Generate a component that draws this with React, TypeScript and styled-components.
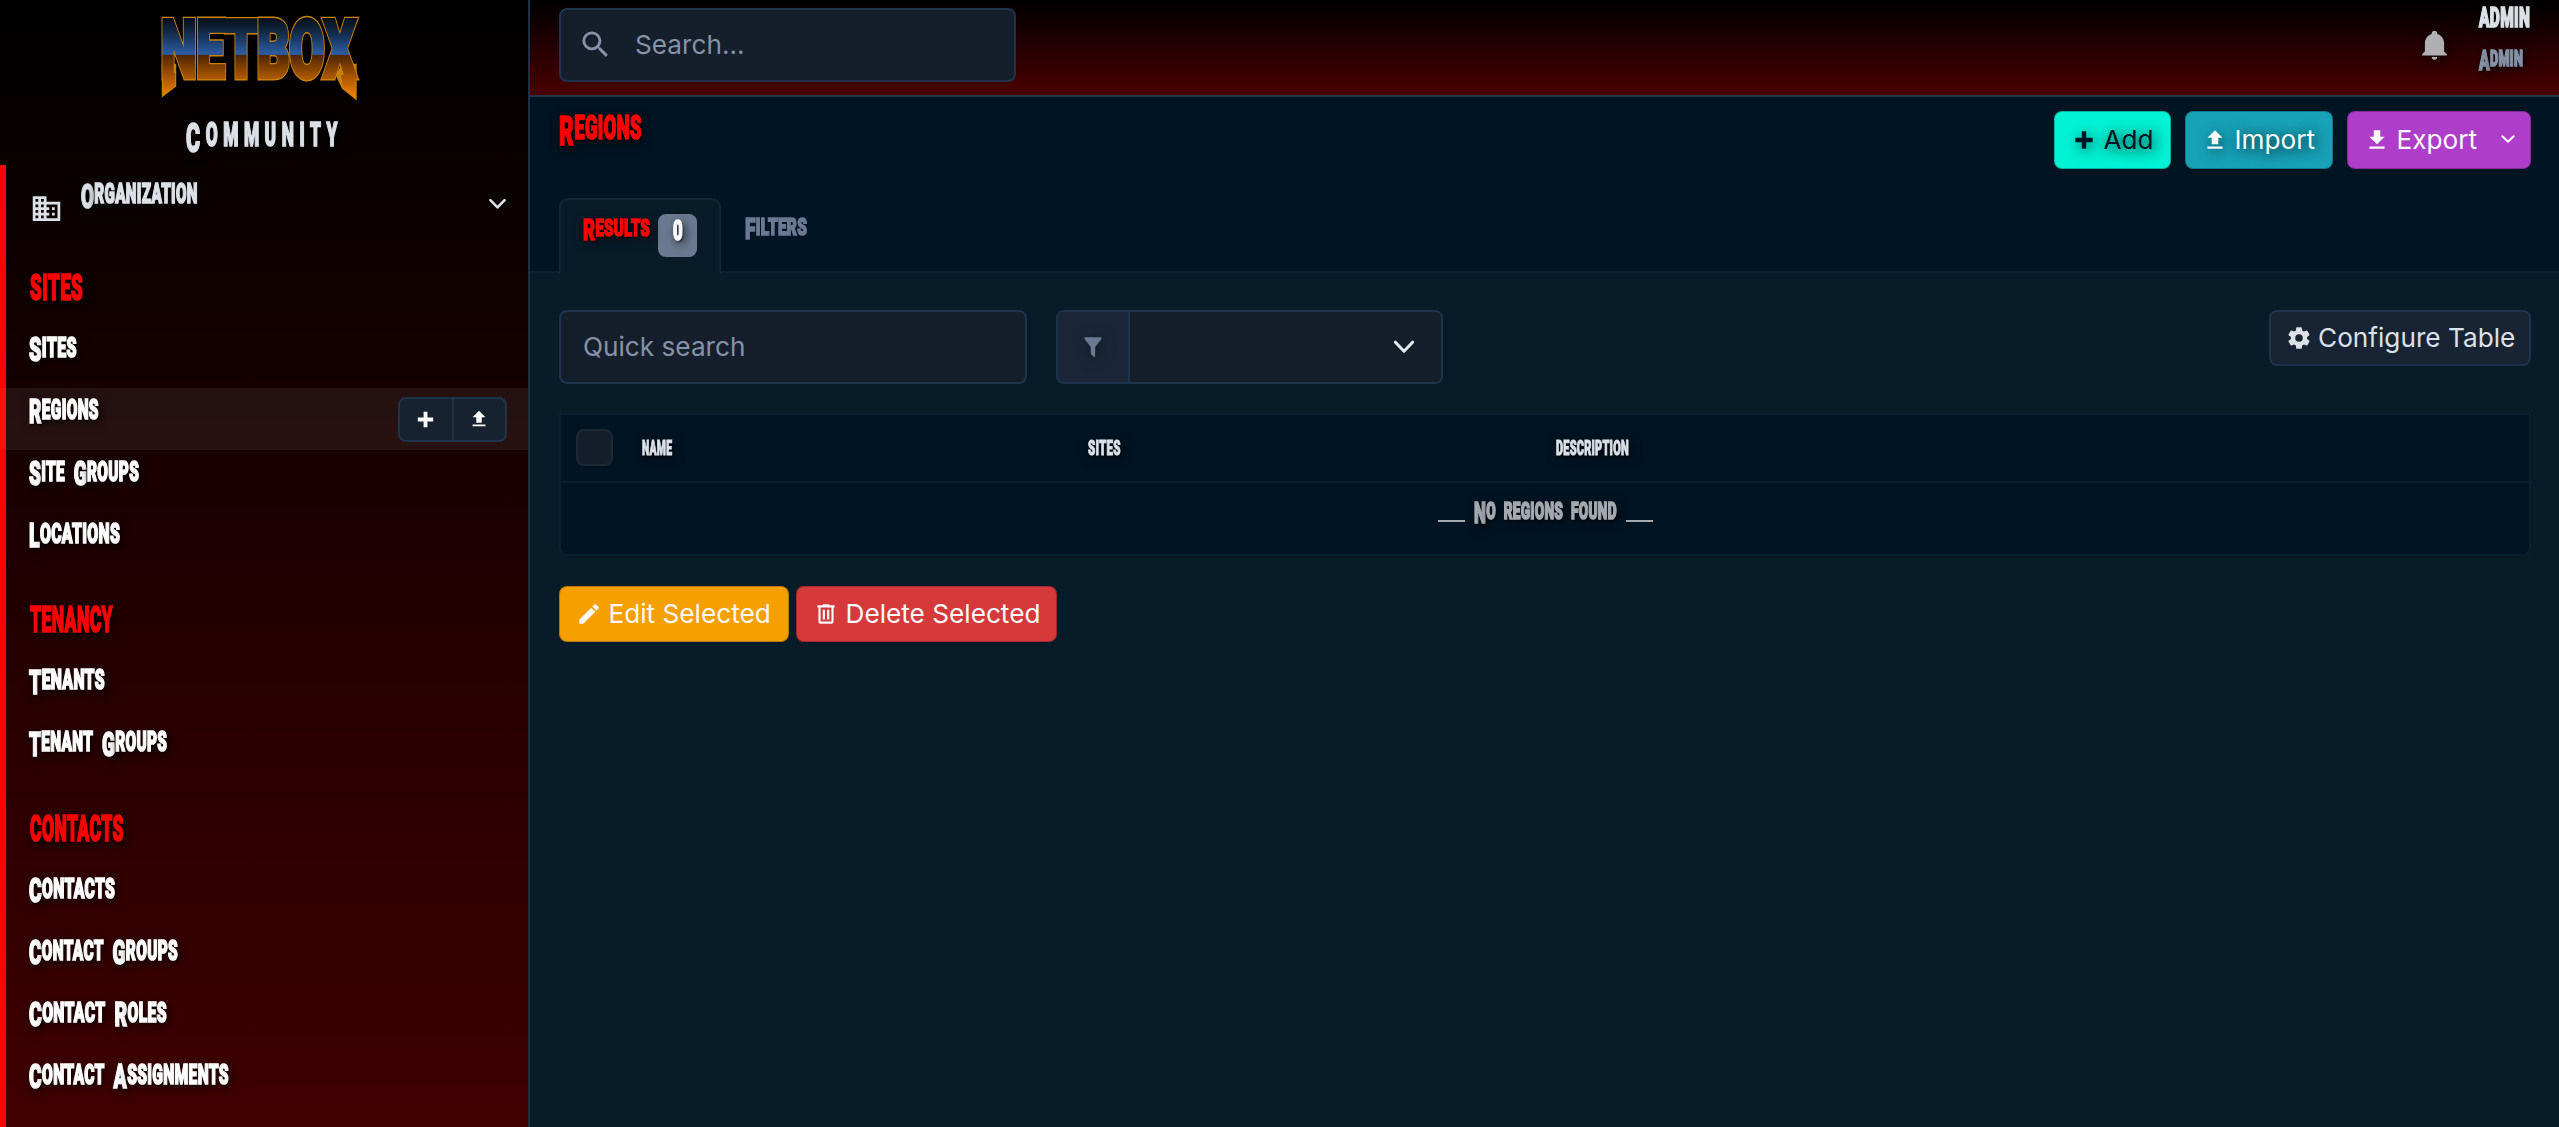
import React, { useLayoutEffect, useRef, useState } from "react";
import styled, { createGlobalStyle, css } from "styled-components";

const Global = createGlobalStyle`
  *, *::before, *::after { box-sizing: border-box; }
  html, body { margin: 0; padding: 0; background: #081b29; }
  body { font-family: Inter, "Liberation Sans", sans-serif; font-size: 26.2px; color: #dce1e7; overflow: hidden; }
`;

const glow = "2px 2px 14px rgba(0, 0, 0, 0.95)";

/* ---------- condensed display lettering ---------- */

const DisplayBox = styled.span<{ $w: number; $h: number; $color: string; $spacing: number; $shadow: boolean }>`
  display: block;
  flex: none;
  width: ${(p) => p.$w}px;
  height: ${(p) => p.$h}px;
  line-height: ${(p) => p.$h}px;
  font-family: Roboto, "Liberation Sans", sans-serif;
  font-weight: 900;
  font-size: ${(p) => (p.$h - 1) / 0.711}px;
  letter-spacing: ${(p) => p.$spacing}em;
  word-spacing: 0.3em;
  text-transform: uppercase;
  white-space: nowrap;
  color: ${(p) => p.$color};
  -webkit-text-stroke: ${(p) => (p.$h > 16 ? 1.7 : 1)}px ${(p) => p.$color};
  text-shadow: ${(p) => (p.$shadow ? "2px 2px 3px rgba(0,0,0,.6), 4px 3px 14px #000" : "none")};
`;

const DisplayInner = styled.span`
  display: inline-block;
  transform-origin: 0 50%;
`;

const Word = styled.span<{ $tail: boolean }>`
  display: inline-block;
  ${(p) =>
    p.$tail &&
    css`
      &::first-letter {
        font-size: 1.24em;
        vertical-align: -0.138em;
      }
    `}
`;

type DisplayProps = {
  text: string;
  w: number;
  h: number;
  color?: string;
  spacing?: number;
  tails?: boolean;
  shadow?: boolean;
};

function Display({ text, w, h, color = "#fff", spacing = 0.02, tails = true, shadow = true }: DisplayProps) {
  const ref = useRef<HTMLSpanElement>(null);
  const [scale, setScale] = useState(1);
  useLayoutEffect(() => {
    if (ref.current) setScale(w / (ref.current.offsetWidth || 1));
  }, [text, w, h]);
  return (
    <DisplayBox $w={w} $h={h} $color={color} $spacing={spacing} $shadow={shadow}>
      <DisplayInner ref={ref} style={{ transform: `scaleX(${scale})` }}>
        {text.split(" ").map((word, i) => (
          <React.Fragment key={i}>
            {i > 0 && " "}
            <Word $tail={tails && /^[A-Z]/.test(word)}>{word}</Word>
          </React.Fragment>
        ))}
      </DisplayInner>
    </DisplayBox>
  );
}

/* ---------- icons ---------- */

const paths = {
  plus: "M20 14H14V20H10V14H4V10H10V4H14V10H20V14Z",
  upload: "M9,16V10H5L12,3L19,10H15V16H9M5,20V18H19V20H5Z",
  download: "M5,20H19V18H5M19,9H15V3H9V9H5L12,16L19,9Z",
  domain:
    "M18,15H16V17H18M18,11H16V13H18M20,19H12V17H14V15H12V13H14V11H12V9H20M10,7H8V5H10M10,11H8V9H10M10,15H8V13H10M10,19H8V17H10M6,7H4V5H6M6,11H4V9H6M6,15H4V13H6M6,19H4V17H6M12,7V3H2V21H22V7H12Z",
  magnify:
    "M9.5,3A6.5,6.5 0 0,1 16,9.5C16,11.11 15.41,12.59 14.44,13.73L14.71,14H15.5L20.5,19L19,20.5L14,15.5V14.71L13.73,14.44C12.59,15.41 11.11,16 9.5,16A6.5,6.5 0 0,1 3,9.5A6.5,6.5 0 0,1 9.5,3M9.5,5C7,5 5,7 5,9.5C5,12 7,14 9.5,14C12,14 14,12 14,9.5C14,7 12,5 9.5,5Z",
  bell: "M21,19V20H3V19L5,17V11C5,7.9 7.03,5.17 10,4.29C10,4.19 10,4.1 10,4A2,2 0 0,1 12,2A2,2 0 0,1 14,4C14,4.1 14,4.19 14,4.29C16.97,5.17 19,7.9 19,11V17L21,19M14,21A2,2 0 0,1 12,23A2,2 0 0,1 10,21",
  filter:
    "M14,12V19.88C14.04,20.18 13.94,20.5 13.71,20.71C13.32,21.1 12.69,21.1 12.3,20.71L10.29,18.7C10.06,18.47 9.96,18.16 10,17.87V12H9.97L4.21,4.62C3.87,4.19 3.95,3.56 4.38,3.22C4.57,3.08 4.78,3 5,3V3H19V3C19.22,3 19.43,3.08 19.62,3.22C20.05,3.56 20.13,4.19 19.79,4.62L14.03,12H14Z",
  cog: "M12,15.5A3.5,3.5 0 0,1 8.5,12A3.5,3.5 0 0,1 12,8.5A3.5,3.5 0 0,1 15.5,12A3.5,3.5 0 0,1 12,15.5M19.43,12.97C19.47,12.65 19.5,12.33 19.5,12C19.5,11.67 19.47,11.34 19.43,11L21.54,9.37C21.73,9.22 21.78,8.95 21.66,8.73L19.66,5.27C19.54,5.05 19.27,4.96 19.05,5.05L16.56,6.05C16.04,5.66 15.5,5.32 14.87,5.07L14.5,2.42C14.46,2.18 14.25,2 14,2H10C9.75,2 9.54,2.18 9.5,2.42L9.13,5.07C8.5,5.32 7.96,5.66 7.44,6.05L4.95,5.05C4.73,4.96 4.46,5.05 4.34,5.27L2.34,8.73C2.21,8.95 2.27,9.22 2.46,9.37L4.57,11C4.53,11.34 4.5,11.67 4.5,12C4.5,12.33 4.53,12.65 4.57,12.97L2.46,14.63C2.27,14.78 2.21,15.05 2.34,15.27L4.34,18.73C4.46,18.95 4.73,19.03 4.95,18.95L7.44,17.94C7.96,18.34 8.5,18.68 9.13,18.93L9.5,21.58C9.54,21.82 9.75,22 10,22H14C14.25,22 14.46,21.82 14.5,21.58L14.87,18.93C15.5,18.67 16.04,18.34 16.56,17.94L19.05,18.95C19.27,19.03 19.54,18.95 19.66,18.73L21.66,15.27C21.78,15.05 21.73,14.78 21.54,14.63L19.43,12.97Z",
  pencil:
    "M20.71,7.04C21.1,6.65 21.1,6 20.71,5.63L18.37,3.29C18,2.9 17.35,2.9 16.96,3.29L15.12,5.12L18.87,8.87M3,17.25V21H6.75L17.81,9.93L14.06,6.18L3,17.25Z",
  trash:
    "M9,3V4H4V6H5V19A2,2 0 0,0 7,21H17A2,2 0 0,0 19,19V6H20V4H15V3H9M7,6H17V19H7V6M9,8V17H11V8H9M13,8V17H15V8H13Z",
};

const Svg = styled.svg<{ $glow?: boolean }>`
  display: block;
  flex: none;
  overflow: visible;
  filter: ${(p) => (p.$glow ? "drop-shadow(2px 3px 7px rgba(0,0,0,.6))" : "none")};
`;

const Icon = ({ name, size, glow }: { name: keyof typeof paths; size: number; glow?: boolean }) => (
  <Svg width={size} height={size} viewBox="0 0 24 24" fill="currentColor" $glow={glow}>
    <path d={paths[name]} />
  </Svg>
);

const Chevron = ({ w, stroke = 2.6 }: { w: number; stroke?: number }) => (
  <Svg width={w} height={w * 0.58} viewBox={`0 0 ${w} ${w * 0.58}`} fill="none" stroke="currentColor" strokeWidth={stroke} strokeLinecap="round" strokeLinejoin="round">
    <path d={`M1.4 1.2L${w / 2} ${w * 0.58 - 1.4}L${w - 1.4} 1.2`} />
  </Svg>
);

/* ---------- sidebar ---------- */

const Page = styled.div`
  display: flex;
  width: 2559px;
  height: 1127px;
  overflow: hidden;
`;

const Sidebar = styled.aside`
  width: 530px;
  height: 1127px;
  flex: none;
  border-right: 2px solid #1f2f45;
  background: linear-gradient(#000 0, #060000 110px, #400000 1127px);
  display: flex;
  flex-direction: column;
`;

const Brand = styled.div`
  height: 165px;
  flex: none;
  padding: 15px 0 0 158px;
`;

const Community = styled.div`
  padding: 20px 0 0 28px;
`;

const Menu = styled.nav`
  flex: 1;
  position: relative;
  &::before {
    content: "";
    position: absolute;
    inset: 0 auto 0 0;
    width: 6px;
    background: #f00;
  }
`;

const MenuHead = styled.div`
  display: flex;
  height: 81px;
  padding: 0 22px 0 30px;
  color: #dce1e7;
`;
const HeadIcon = styled.div`
  padding: 27px 18px 0 0;
`;
const HeadText = styled.div`
  flex: 1;
  padding-top: 19px;
`;
const HeadChevron = styled.div`
  padding-top: 34px;
`;

const GroupTitle = styled.div<{ $h: number }>`
  height: ${(p) => p.$h}px;
  padding-left: 29.5px;
  display: flex;
  align-items: flex-end;
  padding-bottom: 25.5px;
`;

const Item = styled.div<{ $active?: boolean }>`
  height: 62px;
  padding: 11.5px 21px 0 29px;
  display: flex;
  justify-content: space-between;
  align-items: flex-start;
  position: relative;
  background: ${(p) => (p.$active ? "rgba(255,255,255,.065)" : "transparent")};
`;

const Actions = styled.div`
  display: flex;
  width: 109px;
  height: 45px;
  margin-top: -3px;
  border: 2px solid #1f344c;
  border-radius: 8px;
  background: #172230;
`;
const Action = styled.div`
  flex: 1;
  display: flex;
  align-items: center;
  justify-content: center;
  color: #fff;
  & + & {
    border-left: 2px solid #1f344c;
  }
`;

const LogoText = styled.text`
  font-family: Roboto, "Liberation Sans", sans-serif;
  font-weight: 900;
  font-size: 80px;
`;

const Lettering = () => (
  <LogoText x="3" y="62" textLength="195" lengthAdjust="spacingAndGlyphs">
    NETBOX
  </LogoText>
);

const Logo = () => (
  <Svg width={204} height={88} viewBox="0 0 204 88">
    <defs>
      <linearGradient id="doom" gradientUnits="userSpaceOnUse" x1="0" y1="2" x2="0" y2="85">
        <stop offset="0" stopColor="#060d16" />
        <stop offset=".2" stopColor="#142c4b" />
        <stop offset=".45" stopColor="#2c5ea6" />
        <stop offset=".46" stopColor="#4e2500" />
        <stop offset=".72" stopColor="#a75500" />
        <stop offset="1" stopColor="#ff8a00" />
      </linearGradient>
    </defs>
    <g fill="#c98205" stroke="#c98205" strokeWidth="7" strokeLinejoin="miter">
      <path strokeWidth="2.4" d="M5 50V80L17 71V50Z" />
      <path strokeWidth="2.4" d="M197.500 50V83L185 73L179 60L185 50Z" />
      <Lettering />
    </g>
    <g fill="url(#doom)" stroke="url(#doom)" strokeWidth="4.2" strokeLinejoin="miter">
      <Lettering />
      <path stroke="none" d="M5 58V80L17 71V58Z" />
      <path stroke="none" d="M197.500 60V83L185 73L183 60Z" />
    </g>
  </Svg>
);

type Row = { text: string; w: number; active?: boolean };
const groups: { title: string; w: number; h: number; items: Row[] }[] = [
  {
    title: "SITES",
    w: 53,
    h: 80,
    items: [
      { text: "Sites", w: 48 },
      { text: "Regions", w: 70, active: true },
      { text: "Site Groups", w: 110 },
      { text: "Locations", w: 91 },
    ],
  },
  {
    title: "TENANCY",
    w: 83,
    h: 84.5,
    items: [
      { text: "Tenants", w: 76 },
      { text: "Tenant Groups", w: 138 },
    ],
  },
  {
    title: "CONTACTS",
    w: 94,
    h: 84.5,
    items: [
      { text: "Contacts", w: 86 },
      { text: "Contact Groups", w: 149 },
      { text: "Contact Roles", w: 138 },
      { text: "Contact Assignments", w: 200 },
    ],
  },
];

/* ---------- main ---------- */

const Main = styled.main`
  flex: 1;
  display: flex;
  flex-direction: column;
  min-width: 0;
`;

const TopBar = styled.header`
  height: 97px;
  flex: none;
  border-bottom: 2px solid #24344a;
  background: linear-gradient(#000 0, #4a0000 100%);
  display: flex;
  justify-content: space-between;
  padding: 8px 28px 0 29px;
`;

const SearchBox = styled.div`
  width: 457px;
  height: 74px;
  border: 2px solid #1f344c;
  border-radius: 8px;
  background: #151f2b;
  display: flex;
  align-items: center;
  gap: 22px;
  padding: 0 0 1px 17px;
  color: #8592a8;
`;

const UserArea = styled.div`
  display: flex;
  color: #b0afb4;
`;
const BellWrap = styled.div`
  padding: 20px 28px 0 0;
`;
const UserNames = styled.div`
  width: 52px;
  display: flex;
  flex-direction: column;
  gap: 22px;
`;

const PageHead = styled.section`
  height: 176px;
  flex: none;
  background: #001423;
  border-bottom: 2px solid #082032;
  padding: 14px 28px 0 29px;
  display: flex;
  flex-direction: column;
  justify-content: space-between;
`;
const TitleRow = styled.div`
  display: flex;
  justify-content: space-between;
  align-items: flex-start;
`;
const Title = styled.h1`
  margin: 0;
  padding-top: 5px;
`;
const Buttons = styled.div<{ $gap: number }>`
  display: flex;
  gap: ${(p) => p.$gap}px;
`;
const Button = styled.button<{ $bg: string; $fg?: string; $w: number; $h: number; $glow?: boolean; $border?: string; $gap?: number }>`
  width: ${(p) => p.$w}px;
  height: ${(p) => p.$h}px;
  flex: none;
  padding: 0 0 1px ${(p) => (p.$border ? 14.5 : 16)}px;
  border: ${(p) => (p.$border ? `2px solid ${p.$border}` : "1px solid rgba(0,0,0,.25)")};
  border-radius: 8px;
  background: ${(p) => p.$bg};
  color: ${(p) => p.$fg ?? "#f7f9fc"};
  font: 400 26.2px Inter, "Liberation Sans", sans-serif;
  display: flex;
  align-items: center;
  gap: ${(p) => p.$gap ?? 6.5}px;
  white-space: nowrap;
  text-shadow: ${(p) => (p.$glow ? glow : "none")};
`;
const Caret = styled.span`
  padding: 0 0 1px 17px;
`;

const Tabs = styled.div`
  display: flex;
  height: 75px;
  margin-bottom: -2px;
`;
const Tab = styled.div<{ $active?: boolean }>`
  display: flex;
  gap: 8px;
  padding: ${(p) => (p.$active ? "0 21.5px 0 22px" : "1px 24px 0")};
  ${(p) =>
    p.$active &&
    css`
      background: #081b29;
      border: 2px solid #122636;
      border-bottom: 0;
      border-radius: 9px 9px 0 0;
    `}
`;
const TabText = styled.div`
  padding-top: 19px;
`;
const Badge = styled.span`
  margin-top: 14px;
  width: 39px;
  height: 43px;
  border-radius: 8px;
  background: #6c7a91;
  display: flex;
  justify-content: center;
  padding-top: 7px;
`;

const Body = styled.section`
  flex: 1;
  background: #081b29;
  padding: 37px 28px 0 29px;
`;
const Controls = styled.div`
  display: flex;
  height: 74px;
  align-items: flex-start;
`;
const QuickSearch = styled.div`
  width: 468px;
  height: 74px;
  border: 2px solid #1f344c;
  border-radius: 8px;
  background: #151f2b;
  padding: 0 0 1px 22px;
  display: flex;
  align-items: center;
  color: #8592a8;
`;
const FilterGroup = styled.div`
  width: 387px;
  height: 74px;
  margin-left: 29px;
  margin-right: auto;
  display: flex;
  border: 2px solid #1f344c;
  border-radius: 8px;
  overflow: hidden;
`;
const FilterIcon = styled.div`
  width: 72px;
  border-right: 2px solid #1f344c;
  background: #1b2738;
  color: #6c7a91;
  display: flex;
  align-items: center;
  justify-content: center;
`;
const FilterSelect = styled.div`
  flex: 1;
  background: #151f2b;
  display: flex;
  align-items: center;
  justify-content: flex-end;
  padding-right: 27px;
  color: #e5eaf0;
`;

const Table = styled.div`
  margin: 29px 0 30px;
  height: 143px;
  border: 2px solid #09202f;
  border-radius: 2px 2px 8px 8px;
  background: #001423;
`;
const HeadRow = styled.div`
  height: 68px;
  border-bottom: 2px solid #0a2030;
  display: grid;
  grid-template-columns: 81px 446px 468px 1fr;
  padding-top: 26px;
`;
const CheckBox = styled.span`
  margin: -12px 0 0 14.5px;
  width: 37px;
  height: 37px;
  border: 2px solid #1b2836;
  border-radius: 8px;
  background: #151f2b;
`;
const Empty = styled.div`
  display: flex;
  justify-content: center;
  gap: 9px;
  padding-top: 19px;
`;
const Dash = styled.span`
  width: 27px;
  height: 2px;
  margin-top: 18px;
  background: #a4a9ae;
`;

export default function App() {
  return (
    <Page>
      <Global />
      <Sidebar>
        <Brand>
          <Logo />
          <Community>
            <Display text="Community" w={157} h={24} color="#dce1e7" spacing={0.32} />
          </Community>
        </Brand>
        <Menu>
          <MenuHead>
            <HeadIcon>
              <Icon name="domain" size={33} />
            </HeadIcon>
            <HeadText>
              <Display text="Organization" w={117} h={20.5} color="#dce1e7" />
            </HeadText>
            <HeadChevron>
              <Chevron w={17} />
            </HeadChevron>
          </MenuHead>
          {groups.map((g) => (
            <React.Fragment key={g.title}>
              <GroupTitle $h={g.h}>
                <Display text={g.title} w={g.w} h={27} color="#f00" tails={false} />
              </GroupTitle>
              {g.items.map((it) => (
                <Item key={it.text} $active={it.active}>
                  <Display text={it.text} w={it.w} h={20.5} />
                  {it.active && (
                    <Actions>
                      <Action>
                        <Icon name="plus" size={23} />
                      </Action>
                      <Action>
                        <Icon name="upload" size={22} />
                      </Action>
                    </Actions>
                  )}
                </Item>
              ))}
            </React.Fragment>
          ))}
        </Menu>
      </Sidebar>
      <Main>
        <TopBar>
          <SearchBox>
            <Icon name="magnify" size={35} />
            Search...
          </SearchBox>
          <UserArea>
            <BellWrap>
              <Icon name="bell" size={33} glow />
            </BellWrap>
            <UserNames>
              <Display text="admin" w={51} h={20} color="#dce1e7" />
              <Display text="Admin" w={44} h={17} color="#8592a8" />
            </UserNames>
          </UserArea>
        </TopBar>
        <PageHead>
          <TitleRow>
            <Title>
              <Display text="Regions" w={83} h={24} color="#f00" />
            </Title>
            <Buttons $gap={14}>
              <Button $bg="#00f2d4" $fg="#001423" $w={117} $h={58} $glow>
                <Icon name="plus" size={26} glow />
                Add
              </Button>
              <Button $bg="#17a2b8" $w={148} $h={58} $glow>
                <Icon name="upload" size={26} glow />
                Import
              </Button>
              <Button $bg="#ae3ec9" $w={184} $h={58}>
                <Icon name="download" size={26} />
                Export
                <Caret>
                  <Chevron w={14} stroke={2} />
                </Caret>
              </Button>
            </Buttons>
          </TitleRow>
          <Tabs>
            <Tab $active>
              <TabText>
                <Display text="Results" w={67} h={18} color="#f00" />
              </TabText>
              <Badge>
                <Display text="0" w={10} h={20} color="#f7f9fc" />
              </Badge>
            </Tab>
            <Tab>
              <TabText>
                <Display text="Filters" w={62} h={18} color="#6c7a91" shadow={false} />
              </TabText>
            </Tab>
          </Tabs>
        </PageHead>
        <Body>
          <Controls>
            <QuickSearch>Quick search</QuickSearch>
            <FilterGroup>
              <FilterIcon>
                <Icon name="filter" size={26} glow />
              </FilterIcon>
              <FilterSelect>
                <Chevron w={20} stroke={3} />
              </FilterSelect>
            </FilterGroup>
            <Button $bg="#182433" $fg="#dce1e7" $border="#1f344c" $w={262} $h={56}>
              <Icon name="cog" size={26} />
              Configure Table
            </Button>
          </Controls>
          <Table>
            <HeadRow>
              <CheckBox />
              <Display text="Name" w={30} h={15} color="#dce1e7" tails={false} />
              <Display text="Sites" w={33} h={15} color="#dce1e7" tails={false} />
              <Display text="Description" w={73} h={15} color="#dce1e7" tails={false} />
            </HeadRow>
            <Empty>
              <Dash />
              <Display text="No regions found" w={143} h={18} color="#a4a9ae" />
              <Dash />
            </Empty>
          </Table>
          <Buttons $gap={7}>
            <Button $bg="#f59f00" $w={230} $h={56}>
              <Icon name="pencil" size={26} />
              Edit Selected
            </Button>
            <Button $bg="#d63939" $w={261} $h={56}>
              <Icon name="trash" size={26} />
              Delete Selected
            </Button>
          </Buttons>
        </Body>
      </Main>
    </Page>
  );
}
